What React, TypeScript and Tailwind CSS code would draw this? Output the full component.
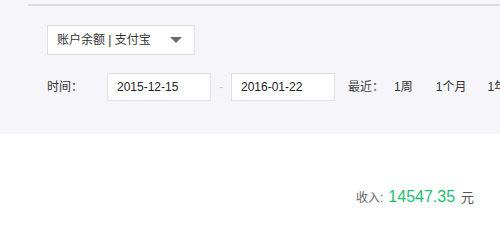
export default function App() {
  const font = { fontFamily: '"Liberation Sans", "Noto Sans CJK SC", sans-serif' }
  return (
    <div className="h-[244px] w-[500px] overflow-hidden bg-white text-[12px] text-[#333]" style={font}>
      <div className="h-[134px] bg-[#f5f5fa] pl-[47px] pt-[4px]">
        <div className="ml-[-19px] h-[2px] bg-[#dcdae3]" />
        <div className="mt-[19px] flex h-[30px] w-[148px] items-center justify-between border border-[#e0e0e6] bg-white pl-[9px] pr-[12px]">
          <span className="whitespace-nowrap text-[#333]">账户余额 | 支付宝</span>
          <span className="h-0 w-0 border-x-[6px] border-t-[6px] border-x-transparent border-t-[#6b6b6b]" />
        </div>
        <div className="mt-[18px] flex h-[28px] w-[600px] items-center whitespace-nowrap">
          <span className="w-[60px] shrink-0">时间：</span>
          <div className="flex h-[28px] w-[104px] shrink-0 items-center border border-[#e0e0e6] bg-white pl-[9px] text-[12px] text-[#222]">
            2015-12-15
          </div>
          <span className="w-[20px] shrink-0 text-center text-[#ccc]">-</span>
          <div className="flex h-[28px] w-[104px] shrink-0 items-center border border-[#e0e0e6] bg-white pl-[9px] text-[12px] text-[#222]">
            2016-01-22
          </div>
          <span className="ml-[13px] shrink-0 text-[#444]">最近：</span>
          <span className="ml-[10px] shrink-0">1周</span>
          <span className="ml-[23px] shrink-0">1个月</span>
          <span className="ml-[21px] shrink-0">1年</span>
        </div>
      </div>
      <div className="flex items-baseline whitespace-nowrap pl-[356px] pt-[51px]">
        <span className="text-[12px] text-[#666]">收入:</span>
        <span className="ml-[5px] text-[16px] text-[#1ebe72]">14547.35</span>
        <span className="ml-[6px] text-[13px] text-[#555]">元</span>
      </div>
    </div>
  )
}
